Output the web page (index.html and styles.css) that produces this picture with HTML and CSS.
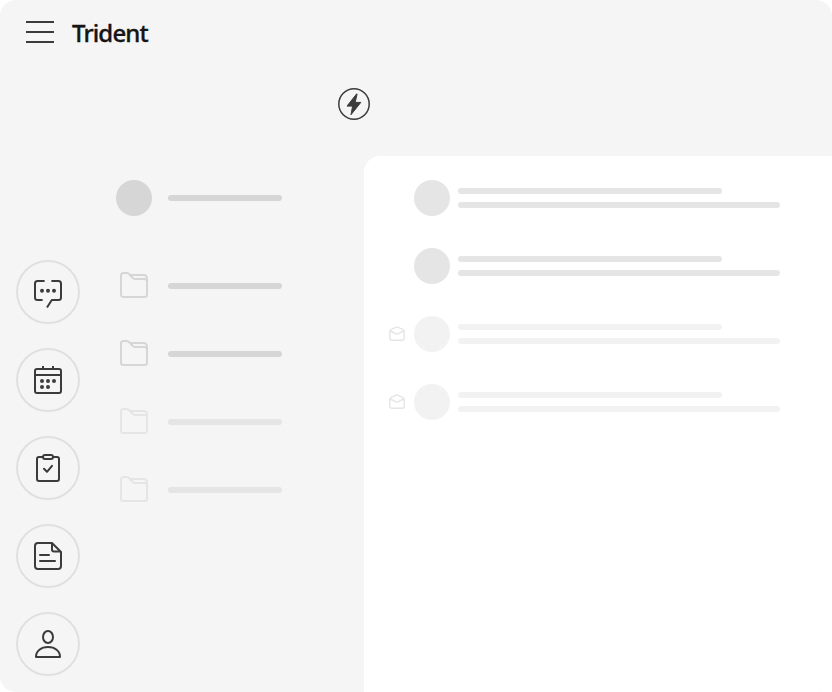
FILE: index.html
```html
<!DOCTYPE html>
<html lang="en">
<head>
<meta charset="utf-8">
<title>Trident</title>
<link rel="stylesheet" href="styles.css">
</head>
<body>
<svg class="defs" aria-hidden="true">
  <symbol id="folder" viewBox="0 0 36 36"><path d="M5 26.5V7.5Q5 5 7.5 5H10.8Q12.3 5 13.3 6.2L16.8 10Q17.6 11 19 11H28.5Q31 11 31 13.5V26.5Q31 29 28.5 29H7.5Q5 29 5 26.5ZM13.8 7H27.5Q31 7 31 10.5V14"/></symbol>
  <symbol id="mail" viewBox="0 0 18 18"><path d="M1.8 6.3V13Q1.8 15.2 4 15.2H14Q16.2 15.2 16.2 13V6.3Q16.2 5.2 15 4.6L9.8 2.2Q9 1.8 8.2 2.2L3 4.6Q1.8 5.2 1.8 6.3ZM2.3 6L8.2 8.9Q9 9.3 9.8 8.9L15.7 6"/></symbol>
</svg>
<div class="app">
  <header class="header">
    <div class="menu"><i></i><i></i><i></i></div>
    <h1 class="title">Trident</h1>
  </header>
  <div class="toolbar">
    <svg class="bolt" viewBox="0 0 32 32"><circle cx="16" cy="16" r="15.2"/><path d="M18.6 5.9L9 18.1H14.6L13 26.7L22.8 14.4H17.2L19.1 6.1Z"/></svg>
  </div>
  <div class="body">
    <nav class="rail">
      <svg class="app-icon" viewBox="0 0 64 64"><circle class="ring" cx="32" cy="32" r="31"/><path d="M28.6 21H21.5Q19 21 19 23.5V37.5Q19 40 21.5 40H26.6M35.4 21H42.5Q45 21 45 23.5V37.5Q45 40 42.5 40H35.8L31 47.5"/><g class="dots"><circle cx="26" cy="30.7" r="2"/><circle cx="32" cy="30.7" r="2"/><circle cx="38" cy="30.7" r="2"/></g></svg>
      <svg class="app-icon" viewBox="0 0 64 64"><circle class="ring" cx="32" cy="32" r="31"/><rect x="19" y="21" width="26" height="24" rx="2"/><path d="M19 27H45M27 18V21M37 18V21"/><g class="dots"><circle cx="26" cy="33" r="2"/><circle cx="32" cy="33" r="2"/><circle cx="38" cy="33" r="2"/><circle cx="26" cy="39" r="2"/><circle cx="32" cy="39" r="2"/></g></svg>
      <svg class="app-icon" viewBox="0 0 64 64"><circle class="ring" cx="32" cy="32" r="31"/><path d="M27 21H23Q21 21 21 23V43Q21 45 23 45H41Q43 45 43 43V23Q43 21 41 21H37"/><path class="round" d="M28 32.7L31 35.8L36 29.8"/><rect x="27" y="19" width="10" height="4" rx="2"/></svg>
      <svg class="app-icon" viewBox="0 0 64 64"><circle class="ring" cx="32" cy="32" r="31"/><path d="M36 19H22Q19 19 19 22V42Q19 45 22 45H42Q45 45 45 42V28ZM36 19V25.5Q36 27.5 38 27.5H45"/><path class="round" d="M24 31H33M24 37H39"/></svg>
      <svg class="app-icon" viewBox="0 0 64 64"><circle class="ring" cx="32" cy="32" r="31"/><ellipse cx="32" cy="25" rx="5" ry="6"/><path d="M20 45C20 38.8 25 35 32 35S44 38.8 44 45Z"/></svg>
    </nav>
    <aside class="folders">
      <div class="folder account"><span class="avatar"></span><span class="line"></span></div>
      <div class="folder"><svg class="folder-icon"><use href="#folder"/></svg><span class="line"></span></div>
      <div class="folder"><svg class="folder-icon"><use href="#folder"/></svg><span class="line"></span></div>
      <div class="folder faded"><svg class="folder-icon"><use href="#folder"/></svg><span class="line"></span></div>
      <div class="folder faded"><svg class="folder-icon"><use href="#folder"/></svg><span class="line"></span></div>
    </aside>
    <main class="messages">
      <div class="message"><span class="status"></span><span class="avatar"></span><div class="lines"><span class="line short"></span><span class="line"></span></div></div>
      <div class="message"><span class="status"></span><span class="avatar"></span><div class="lines"><span class="line short"></span><span class="line"></span></div></div>
      <div class="message read"><svg class="status"><use href="#mail"/></svg><span class="avatar"></span><div class="lines"><span class="line short"></span><span class="line"></span></div></div>
      <div class="message read"><svg class="status"><use href="#mail"/></svg><span class="avatar"></span><div class="lines"><span class="line short"></span><span class="line"></span></div></div>
    </main>
  </div>
</div>
</body>
</html>
```
FILE: styles.css
```css
* { box-sizing: border-box; }
body { margin: 0; background: #fff; font-family: "Noto Sans", sans-serif; }
svg { display: block; flex: none; fill: none; stroke-linecap: butt; stroke-linejoin: round; }
.defs { display: none; }
.app { width: 832px; height: 692px; background: #f5f5f5; border-radius: 16px; overflow: hidden; display: flex; flex-direction: column; }
.header { height: 68px; padding: 0 26px; display: flex; gap: 18px; align-items: flex-start; }
.menu { width: 28px; padding-top: 21px; display: flex; flex-direction: column; gap: 8px; }
.menu i { height: 2px; background: #3b3b3b; }
.title { margin: 16px 0 0; font-size: 24px; line-height: 33px; font-weight: 500; letter-spacing: -0.85px; color: #151515; -webkit-text-stroke: 0.35px #151515; }
.toolbar { height: 88px; padding: 20px 0 0 338px; }
.bolt { width: 32px; height: 32px; }
.bolt circle { stroke: #3b3b3b; stroke-width: 1.5; }
.bolt path { fill: #3b3b3b; stroke: #3b3b3b; stroke-width: 1; }
.body { flex: 1; display: flex; }
.rail { width: 116px; padding: 104px 0 0 16px; display: flex; flex-direction: column; gap: 24px; }
.app-icon { width: 64px; height: 64px; stroke: #3b3b3b; stroke-width: 2; }
.ring { stroke: #e0e0e0; }
.dots { fill: #3b3b3b; stroke: none; }
.round { stroke-linecap: round; }
.folders { width: 248px; padding-top: 24px; display: flex; flex-direction: column; gap: 32px; }
.folder { height: 36px; display: flex; align-items: center; gap: 16px; color: #d6d6d6; }
.account { margin-bottom: 20px; }
.faded { color: #e5e5e5; }
.folder-icon { width: 36px; height: 36px; stroke: currentColor; stroke-width: 2; }
.avatar { width: 36px; height: 36px; border-radius: 50%; background: currentColor; flex: none; }
.line { display: block; height: 6px; border-radius: 3px; background: currentColor; }
.folder .line { width: 114px; }
.messages { flex: 1; padding: 24px 0 0 24px; background: #fff; border-top-left-radius: 16px; display: flex; flex-direction: column; gap: 32px; }
.message { height: 36px; display: flex; align-items: center; gap: 8px; color: #e5e5e5; }
.read { color: #f2f2f2; }
.status { width: 18px; height: 18px; flex: none; stroke: #e5e5e5; stroke-width: 1.4; }
.lines { width: 322px; display: flex; flex-direction: column; gap: 8px; }
.short { width: 264px; }
```
